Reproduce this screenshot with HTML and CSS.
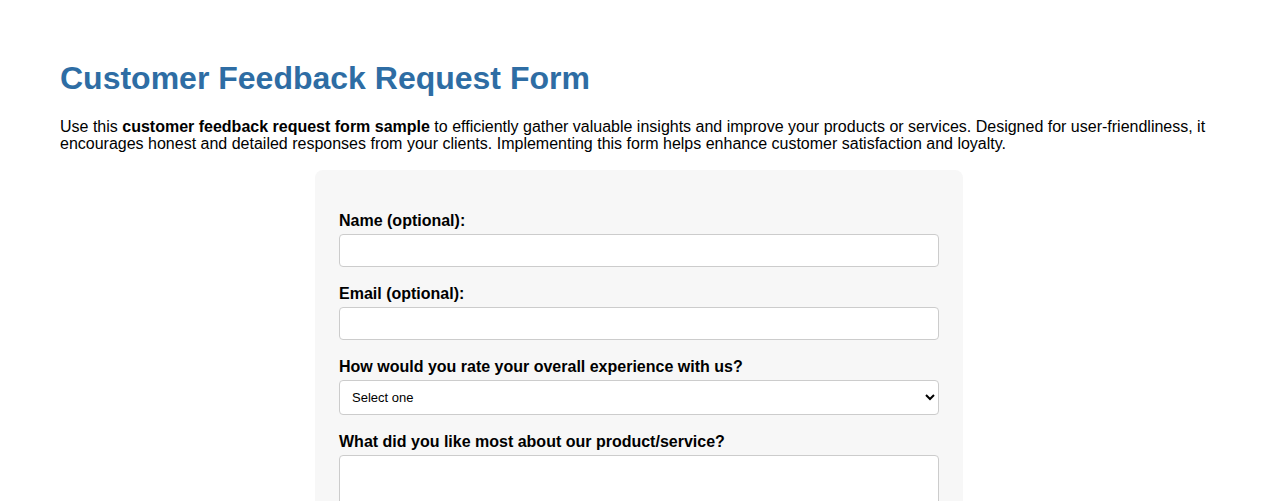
FILE: index.html
```html
<!DOCTYPE html>
<html lang="en">
<head>
<meta charset="utf-8">
<title>Customer Feedback Request Form</title>
<link rel="stylesheet" href="styles.css">
</head>
<body>
<main class="page">
  <h1 class="title">Customer Feedback Request Form</h1>
  <p class="intro">Use this <strong>customer feedback request form sample</strong> to efficiently gather valuable insights and improve your products or services. Designed for user-friendliness, it encourages honest and detailed responses from your clients. Implementing this form helps enhance customer satisfaction and loyalty.</p>
  <form class="form">
    <label class="label" for="name">Name (optional):</label>
    <input class="field" type="text" id="name">
    <label class="label" for="email">Email (optional):</label>
    <input class="field" type="email" id="email">
    <label class="label" for="rating">How would you rate your overall experience with us?</label>
    <select class="field select" id="rating">
      <option>Select one</option>
      <option>Excellent</option>
      <option>Good</option>
      <option>Average</option>
      <option>Poor</option>
    </select>
    <label class="label" for="liked">What did you like most about our product/service?</label>
    <textarea class="field area" id="liked"></textarea>
  </form>
</main>
</body>
</html>
```
FILE: styles.css
```css
html, body {
  margin: 0;
  padding: 0;
  background: #ffffff;
}
body {
  font-family: "Liberation Sans", Arial, sans-serif;
  color: #000;
}
.page {
  padding: 60px 60px 0 60px;
}
.title {
  margin: 0;
  font-size: 32px;
  line-height: 37px;
  font-weight: bold;
  color: #2e6da4;
}
.intro {
  margin: 21px 0 0 0;
  font-size: 16px;
  line-height: 17px;
}
.form {
  width: 600px;
  margin: 18px auto 0 auto;
  background: #f7f7f7;
  border-radius: 8px;
  padding: 42px 24px 24px 24px;
  display: flex;
  flex-direction: column;
}
.label {
  display: block;
  font-weight: bold;
  font-size: 16px;
  line-height: 18px;
  margin-bottom: 4px;
}
.field {
  box-sizing: border-box;
  width: 600px;
  height: 33px;
  margin: 0 0 18px 0;
  border: 1px solid #cccccc;
  border-radius: 4px;
  background: #fff;
  font-family: "Liberation Sans", Arial, sans-serif;
  font-size: 16px;
  padding: 6px 8px;
}
.select {
  height: 35px;
  font-size: 13px;
  padding: 0 8px;
  color: #000;
}
.area {
  height: 100px;
  resize: vertical;
}
```
